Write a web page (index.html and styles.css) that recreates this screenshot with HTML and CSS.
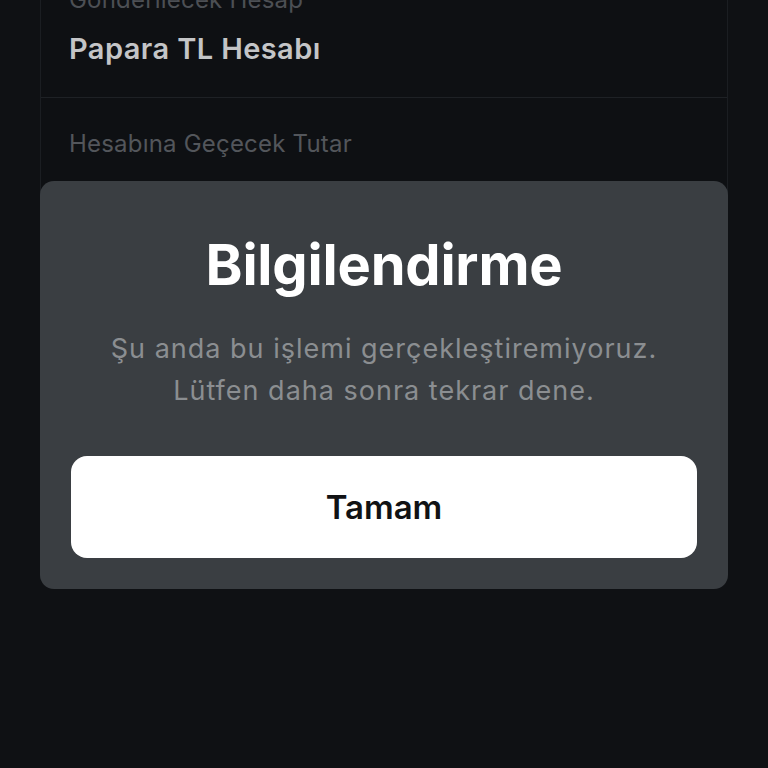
FILE: index.html
```html
<!DOCTYPE html>
<html lang="tr">
<head>
<meta charset="utf-8">
<link rel="stylesheet" href="styles.css">
</head>
<body>
<div class="screen">
  <div class="card">
    <div class="row row-first">
      <div class="label">Gönderilecek Hesap</div>
      <div class="value">Papara TL Hesabı</div>
    </div>
    <div class="row row-second">
      <div class="label">Hesabına Geçecek Tutar</div>
    </div>
  </div>
  <div class="modal">
    <h1 class="modal-title">Bilgilendirme</h1>
    <p class="modal-text">Şu anda bu işlemi gerçekleştiremiyoruz.<br>Lütfen daha sonra tekrar dene.</p>
    <button class="modal-btn">Tamam</button>
  </div>
</div>
</body>
</html>
```
FILE: styles.css
```css
* { box-sizing: border-box; }
html, body {
  margin: 0;
  padding: 0;
  background: #0f1114;
  width: 768px;
  height: 768px;
  overflow: hidden;
  font-family: Inter, "Noto Sans", sans-serif;
}
.screen {
  position: relative;
  display: flow-root;
  height: 768px;
  padding: 0 40px;
}
.card {
  margin-top: -40px;
  border: 1px solid #1b1e22;
  border-top: none;
  background: #0e1013;
  height: 300px;
}
.row {
  padding: 0 28px;
}
.row-first {
  height: 138px;
  border-bottom: 1px solid #1e2125;
  padding-top: 26px;
}
.label {
  font-size: 24px;
  color: #4c4f54;
  letter-spacing: 0.2px;
  line-height: 28px;
}
.value {
  margin-top: 18px;
  font-size: 29px;
  font-weight: 600;
  color: #c4c5c7;
  letter-spacing: 0.4px;
  line-height: 34px;
}
.row-second {
  padding-top: 32px;
}
.row-second .label {
  color: #53565b;
}
.modal {
  position: absolute;
  top: 181px;
  left: 40px;
  width: 688px;
  height: 408px;
  background: #3a3e42;
  border-radius: 14px;
  padding: 52px 31px 31px;
  display: flex;
  flex-direction: column;
  align-items: center;
}
.modal-title {
  margin: 0;
  font-size: 56px;
  line-height: 64px;
  font-weight: 700;
  color: #ffffff;
  letter-spacing: -0.2px;
}
.modal-text {
  margin: 31px 0 0;
  font-size: 27px;
  line-height: 42px;
  color: #8b8e91;
  text-align: center;
  letter-spacing: 1px;
}
.modal-btn {
  margin-top: auto;
  width: 100%;
  height: 102px;
  border: none;
  border-radius: 16px;
  background: #ffffff;
  color: #111214;
  font-family: Inter, "Noto Sans", sans-serif;
  font-size: 33px;
  font-weight: 600;
  letter-spacing: 0;
}
```
